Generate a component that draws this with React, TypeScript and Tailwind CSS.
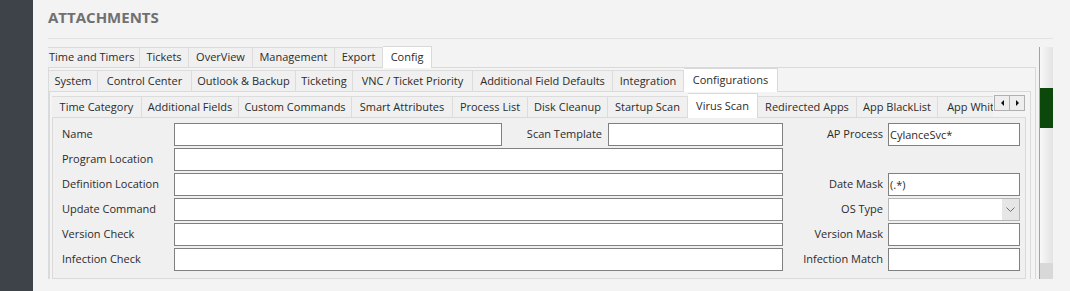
import React from 'react';

type Tab = { label: string; w: string; active?: boolean; flush?: boolean };

const configTabs: Tab[] = [
  { label: 'Time and Timers', w: 'w-[92px]', flush: true },
  { label: 'Tickets', w: 'w-[49px]' },
  { label: 'OverView', w: 'w-[64px]' },
  { label: 'Management', w: 'w-[82px]' },
  { label: 'Export', w: 'w-[48px]' },
  { label: 'Config', w: 'w-[49px]', active: true },
];

const systemTabs: Tab[] = [
  { label: 'System', w: 'w-[49px]' },
  { label: 'Control Center', w: 'w-[94px]' },
  { label: 'Outlook & Backup', w: 'w-[104px]' },
  { label: 'Ticketing', w: 'w-[57px]' },
  { label: 'VNC / Ticket Priority', w: 'w-[120px]' },
  { label: 'Additional Field Defaults', w: 'w-[140px]' },
  { label: 'Integration', w: 'w-[71px]' },
  { label: 'Configurations', w: 'w-[94px]', active: true },
];

const configurationTabs: Tab[] = [
  { label: 'Time Category', w: 'w-[90px]' },
  { label: 'Additional Fields', w: 'w-[97px]' },
  { label: 'Custom Commands', w: 'w-[113px]' },
  { label: 'Smart Attributes', w: 'w-[101px]' },
  { label: 'Process List', w: 'w-[75px]' },
  { label: 'Disk Cleanup', w: 'w-[80px]' },
  { label: 'Startup Scan', w: 'w-[80px]' },
  { label: 'Virus Scan', w: 'w-[70px]', active: true },
  { label: 'Redirected Apps', w: 'w-[99px]' },
  { label: 'App BlackList', w: 'w-[81px]' },
  { label: 'App WhiteList', w: 'w-[90px]' },
];

type Side = { label: string; value?: string; select?: boolean };
type Row = { label: string; split?: boolean; right?: Side };

const rows: Row[] = [
  { label: 'Name', split: true, right: { label: 'AP Process', value: 'CylanceSvc*' } },
  { label: 'Program Location' },
  { label: 'Definition Location', right: { label: 'Date Mask', value: '(.*)' } },
  { label: 'Update Command', right: { label: 'OS Type', select: true } },
  { label: 'Version Check', right: { label: 'Version Mask' } },
  { label: 'Infection Check', right: { label: 'Infection Match' } },
];

const TabRow = ({ tabs, rowH, tabH }: { tabs: Tab[]; rowH: string; tabH: string }) => (
  <div className={`flex items-end ${rowH}`}>
    {tabs.map((t) => (
      <div
        key={t.label}
        className={`${t.w} shrink-0 flex items-center whitespace-nowrap text-[11px] text-[#2b2b2b] ${
          t.flush ? 'justify-start pl-px' : 'justify-center'
        } ${
          t.active
            ? 'h-full bg-white border-t border-r border-[#d9d9d9]'
            : `${tabH} mb-px bg-[#f0f0f0] border-t border-r border-[#dcdcdc]`
        }`}
      >
        {t.label}
      </div>
    ))}
  </div>
);

const TextBox = ({ w, value }: { w?: string; value?: string }) => (
  <input
    readOnly
    defaultValue={value}
    className={`${w ?? 'flex-1 min-w-0'} h-[23px] border border-[#808080] bg-white pl-px text-[11px] text-[#2b2b2b] outline-none`}
  />
);

const Select = () => (
  <div className="w-[132px] h-[23px] border border-[#b5b5b5] bg-white flex">
    <div className="flex-1" />
    <div className="w-[17px] bg-[#e6e6e6] flex items-center justify-center">
      <svg width="9" height="5" viewBox="0 0 9 5">
        <polyline points="0.5,0.5 4.5,4.5 8.5,0.5" fill="none" stroke="#6f6f6f" strokeWidth="1" />
      </svg>
    </div>
  </div>
);

const Arrow = ({ dir }: { dir: 'left' | 'right' }) => (
  <div className={`w-[16px] h-[16px] border border-[#b0b0b0] bg-[#eeeeee] flex items-center justify-center ${dir === 'right' ? '-ml-px' : ''}`}>
    <svg width="3" height="6" viewBox="0 0 3 6">
      <path d={dir === 'left' ? 'M3 0 L0 3 L3 6 Z' : 'M0 0 L3 3 L0 6 Z'} fill="#111" />
    </svg>
  </div>
);

export default function App() {
  return (
    <div className="w-[1070px] h-[291px] flex bg-[#f3f3f3] overflow-hidden font-['Open_Sans',sans-serif]">
      <div className="w-[33px] shrink-0 bg-[#3e4249]" />

      <div className="ml-[15px] w-[1005px] flex flex-col">
        <div className="pt-[9px] pb-[12px] border-b border-[#e2e2e2] text-[15px] leading-[17px] font-bold text-[#707070]">
          ATTACHMENTS
        </div>

        <div className="mt-[7px] flex gap-[3px]">
          {/* Config tab control */}
          <div className="w-[988px] flex flex-col">
            <div className="-mb-px relative z-10">
              <TabRow tabs={configTabs} rowH="h-[22px]" tabH="h-[20px]" />
            </div>
            <div className="border border-b-0 border-[#dadada] bg-[#f4f4f4] pr-[4px]">
              <div className="-mb-px relative z-10">
                <TabRow tabs={systemTabs} rowH="h-[24px]" tabH="h-[21px]" />
              </div>
              <div className="border border-b-0 border-[#dadada] bg-[#f4f4f4] pl-[2px] pr-[4px] pt-px">
                <div className="-mb-px relative z-10 flex items-start">
                  <div className="w-[941px] overflow-hidden">
                    <TabRow tabs={configurationTabs} rowH="h-[25px]" tabH="h-[21px]" />
                  </div>
                  <div className="flex mt-[2px] ml-px">
                    <Arrow dir="left" />
                    <Arrow dir="right" />
                  </div>
                </div>

                {/* Virus Scan page */}
                <div className="border border-[#dadada] bg-[#f0f0f0] pl-[9px] pr-[5px] pt-[5px] pb-[7px] flex flex-col gap-[2px] text-[11px] text-[#2b2b2b]">
                  {rows.map((r) => (
                    <div key={r.label} className="flex items-center h-[23px]">
                      <div className="w-[112px] shrink-0 whitespace-nowrap">{r.label}</div>
                      <div className="w-[609px] shrink-0 flex items-center">
                        {r.split ? (
                          <>
                            <TextBox w="w-[328px]" />
                            <div className="w-[106px] pr-[6px] text-right whitespace-nowrap">Scan Template</div>
                            <TextBox w="w-[175px]" />
                          </>
                        ) : (
                          <TextBox />
                        )}
                      </div>
                      {r.right && (
                        <>
                          <div className="w-[105px] pr-[5px] text-right whitespace-nowrap">{r.right.label}</div>
                          {r.right.select ? <Select /> : <TextBox w="w-[132px]" value={r.right.value} />}
                        </>
                      )}
                    </div>
                  ))}
                </div>
              </div>
            </div>
          </div>

          {/* right side strip */}
          <div className="w-[14px] mt-px flex flex-col border-l border-[#80a8d4] bg-gradient-to-r from-[#f8f8f8] to-[#e3e3e3]">
            <div className="h-[41px]" />
            <div className="h-[40px] bg-[#0c480c]" />
            <div className="flex-1" />
            <div className="h-[16px] bg-[#d8d8d8]" />
          </div>
        </div>
      </div>
    </div>
  );
}
